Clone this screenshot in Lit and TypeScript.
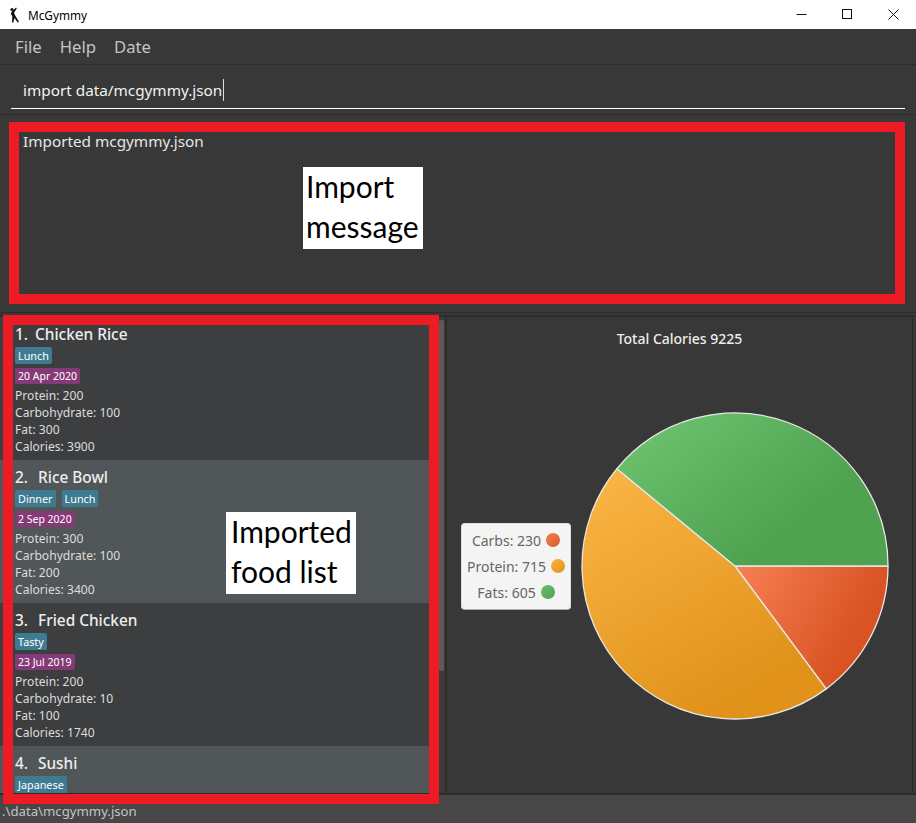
import { LitElement, html, css, svg } from "lit";
import { customElement } from "lit/decorators.js";

const FOODS = [
  { name: "Chicken Rice", tags: ["Lunch"], date: "20 Apr 2020", protein: 200, carbs: 100, fat: 300, calories: 3900 },
  { name: "Rice Bowl", tags: ["Dinner", "Lunch"], date: "2 Sep 2020", protein: 300, carbs: 100, fat: 200, calories: 3400 },
  { name: "Fried Chicken", tags: ["Tasty"], date: "23 Jul 2019", protein: 200, carbs: 10, fat: 100, calories: 1740 },
  { name: "Sushi", tags: ["Japanese"], date: "", protein: 0, carbs: 0, fat: 0, calories: 0 },
];

const SLICES = [
  { label: "Carbs", value: 230, grad: "red", dot: "dot-red" },
  { label: "Protein", value: 715, grad: "orange", dot: "dot-orange" },
  { label: "Fats", value: 605, grad: "green", dot: "dot-green" },
];

const CX = 155;
const CY = 155;
const R = 153;

function slicePaths() {
  const total = SLICES.reduce((sum, s) => sum + s.value, 0);
  let angle = 0;
  return SLICES.map((s) => {
    const next = angle + (s.value / total) * Math.PI * 2;
    const x1 = CX + R * Math.cos(angle);
    const y1 = CY + R * Math.sin(angle);
    const x2 = CX + R * Math.cos(next);
    const y2 = CY + R * Math.sin(next);
    const large = next - angle > Math.PI ? 1 : 0;
    angle = next;
    return svg`<path d="M${CX} ${CY}L${x1} ${y1}A${R} ${R} 0 ${large} 1 ${x2} ${y2}Z" fill="url(#${s.grad})" stroke="#e8e8e8" stroke-width="1.3" stroke-linejoin="round"></path>`;
  });
}

@customElement("app-root")
export class AppRoot extends LitElement {
  static styles = css`
    :host {
      display: flex;
      flex-direction: column;
      position: relative;
      width: 916px;
      height: 823px;
      overflow: hidden;
      background: #383838;
      font-family: "Noto Sans", "Open Sans", sans-serif;
      color: #fff;
    }

    .titlebar {
      height: 29px;
      flex: none;
      display: flex;
      align-items: center;
      background: #fff;
      color: #000;
      font-size: 11.8px;
      padding-left: 9px;
    }
    .app-icon {
      margin-right: 7px;
    }
    .title-text {
      flex: 1;
    }
    .win-btn {
      width: 46px;
      height: 29px;
      display: flex;
      align-items: center;
      justify-content: center;
    }

    .menu {
      height: 35px;
      flex: none;
      display: flex;
      align-items: center;
      gap: 18px;
      padding-left: 15px;
      font-size: 16.7px;
      color: #c4c4c4;
      border-bottom: 1px solid #2c2c2c;
    }

    .command {
      height: 50px;
      flex: none;
      box-sizing: border-box;
      padding: 0 11px 5px;
      border-bottom: 1px solid #2c2c2c;
      display: flex;
    }
    .command-input {
      flex: 1;
      display: flex;
      align-items: center;
      padding-left: 12px;
      padding-top: 6px;
      font-size: 15.3px;
      border-bottom: 1px solid #fff;
      color: #f2f2f2;
    }
    .caret {
      width: 1px;
      height: 22px;
      background: #ddd;
      margin-left: 1px;
    }

    .result {
      height: 198px;
      flex: none;
      box-sizing: border-box;
      padding: 16px 23px;
      font-size: 15.3px;
      color: #e6e6e6;
      border-bottom: 1px solid #2c2c2c;
      margin-bottom: 2px;
    }

    .split {
      flex: 1;
      min-height: 0;
      display: flex;
      border-top: 2px solid #2c2c2c;
      border-bottom: 2px solid #2c2c2c;
    }

    .list-panel {
      width: 445px;
      flex: none;
      display: flex;
      border-right: 1px solid #2c2c2c;
      overflow: hidden;
    }
    .list {
      flex: 1;
      overflow: hidden;
    }
    .scroll-track {
      width: 15px;
      flex: none;
      background: #3a3a3a;
      padding-top: 3px;
    }
    .scroll-thumb {
      width: 5px;
      height: 351px;
      margin-left: 9px;
      background: #5a5a5a;
      border-radius: 2px;
    }

    .cell {
      height: 143px;
      flex: none;
      box-sizing: border-box;
      padding: 8px 15px 0;
      background: #3c3e3f;
      overflow: hidden;
    }
    .cell.even {
      background: #515658;
    }
    .cell-name {
      display: flex;
      font-size: 15.4px;
      line-height: 20px;
      font-weight: 500;
      color: #eee;
    }
    .idx {
      width: 23px;
    }
    .cell:first-child .idx {
      width: 20px;
    }
    .chips {
      display: flex;
      gap: 6px;
      height: 17px;
      margin-top: 2px;
    }
    .chip {
      height: 17px;
      line-height: 17px;
      padding: 0 3px;
      font-size: 10.8px;
      color: #fff;
      border-radius: 2px;
      background: #3e7b91;
    }
    .date-row {
      margin-top: 4px;
      height: 16px;
      margin-bottom: 3px;
      display: flex;
    }
    .date {
      line-height: 16px;
      padding: 0 3px;
      font-size: 10.5px;
      color: #fff;
      border-radius: 2px;
      background: #853a78;
    }
    .macro {
      font-size: 12.1px;
      line-height: 17px;
      color: #ddd;
    }

    .chart-panel {
      flex: 1;
      min-width: 0;
      display: flex;
      flex-direction: column;
      margin-right: 3px;
      border-right: 1px solid #2c2c2c;
      border-left: 1px solid #2c2c2c;
    }
    .chart-title {
      height: 42px;
      flex: none;
      display: flex;
      align-items: center;
      justify-content: center;
      font-size: 14px;
      font-weight: 500;
      color: #eee;
    }
    .chart-body {
      flex: 1;
      display: flex;
      align-items: center;
      gap: 9px;
      padding-left: 14px;
      padding-bottom: 20px;
    }
    .legend {
      width: 110px;
      height: 87px;
      flex: none;
      box-sizing: border-box;
      display: flex;
      flex-direction: column;
      justify-content: center;
      align-items: center;
      gap: 5px;
      background: #f4f4f4;
      border-radius: 4px;
      border: 1px solid #ddd;
      border-bottom-color: #aaa;
      color: #666;
      font-size: 14px;
    }
    .legend-row {
      display: flex;
      align-items: center;
      gap: 5px;
      height: 21px;
    }
    .dot {
      width: 14px;
      height: 14px;
      border-radius: 50%;
    }
    .dot-red {
      background: linear-gradient(135deg, #f47c50, #d95a2b);
    }
    .dot-orange {
      background: linear-gradient(135deg, #f9b342, #e0941a);
    }
    .dot-green {
      background: linear-gradient(135deg, #6ac06d, #4fa24f);
    }
    .pie {
      flex: none;
    }

    .status {
      height: 28px;
      flex: none;
      background: #474747;
      display: flex;
      align-items: center;
      font-size: 13.2px;
      color: #c4c4c4;
      padding-left: 2px;
      padding-top: 4px;
      box-sizing: border-box;
    }

    /* annotations drawn over the screenshot */
    .mark {
      position: absolute;
      box-sizing: border-box;
      border: 10px solid #ed1c24;
    }
    .mark-result {
      left: 9px;
      top: 122px;
      width: 896px;
      height: 182px;
    }
    .mark-list {
      left: 3px;
      top: 315px;
      width: 436px;
      height: 489px;
    }
    .note {
      position: absolute;
      box-sizing: border-box;
      background: #fff;
      color: #000;
      font-family: Lato, "Noto Sans", sans-serif;
      font-size: 30px;
      line-height: 40px;
      padding-left: 3px;
      white-space: pre;
    }
    .note-text {
      display: block;
      margin-top: -1px;
    }
    .note-result {
      left: 303px;
      top: 167px;
      width: 120px;
      height: 82px;
    }
    .note-list {
      left: 226px;
      top: 512px;
      width: 130px;
      height: 82px;
      padding-left: 5px;
    }
  `;

  renderCell(f: (typeof FOODS)[number], i: number) {
    return html`
      <div class="cell ${i % 2 ? "even" : ""}">
        <div class="cell-name"><span class="idx">${i + 1}.</span><span>${f.name}</span></div>
        <div class="chips">${f.tags.map((t) => html`<span class="chip">${t}</span>`)}</div>
        ${f.date
          ? html`
              <div class="date-row"><span class="date">${f.date}</span></div>
              <div class="macro">Protein: ${f.protein}</div>
              <div class="macro">Carbohydrate: ${f.carbs}</div>
              <div class="macro">Fat: ${f.fat}</div>
              <div class="macro">Calories: ${f.calories}</div>
            `
          : ""}
      </div>
    `;
  }

  render() {
    return html`
      <div class="titlebar">
        <svg class="app-icon" width="12" height="17" viewBox="0 0 12 17">
          <circle cx="3" cy="3.5" r="1.6" fill="#111"></circle>
          <path d="M2.5 6L7 1.5l.8.7L5 7l1.5 3 3.5 5.8-1.3.7L5.5 12 4.3 16.5H3L3.3 10 1.8 8z" fill="#111"></path>
        </svg>
        <span class="title-text">McGymmy</span>
        <span class="win-btn">
          <svg width="11" height="11" viewBox="0 0 11 11"><path d="M0.5 5.5h10" stroke="#111" fill="none"></path></svg>
        </span>
        <span class="win-btn">
          <svg width="11" height="11" viewBox="0 0 11 11"><rect x="0.5" y="0.5" width="9" height="9" stroke="#111" fill="none"></rect></svg>
        </span>
        <span class="win-btn">
          <svg width="11" height="11" viewBox="0 0 11 11"><path d="M0.5 0.5l10 10M10.5 0.5l-10 10" stroke="#111" fill="none"></path></svg>
        </span>
      </div>
      <div class="menu"><span>File</span><span>Help</span><span>Date</span></div>
      <div class="command">
        <div class="command-input">import data/mcgymmy.json<span class="caret"></span></div>
      </div>
      <div class="result">Imported mcgymmy.json</div>
      <div class="split">
        <div class="list-panel">
          <div class="list">${FOODS.map((f, i) => this.renderCell(f, i))}</div>
          <div class="scroll-track"><div class="scroll-thumb"></div></div>
        </div>
        <div class="chart-panel">
          <div class="chart-title">Total Calories 9225</div>
          <div class="chart-body">
            <div class="legend">
              ${SLICES.map(
                (s) => html`<div class="legend-row">${s.label}: ${s.value}<span class="dot ${s.dot}"></span></div>`
              )}
            </div>
            <svg class="pie" width="310" height="310" viewBox="0 0 310 310">
              <defs>
                <linearGradient id="red" gradientUnits="userSpaceOnUse" x1="165" y1="165" x2="275" y2="225">
                  <stop offset="0" stop-color="#f47c50"></stop>
                  <stop offset="1" stop-color="#d95323"></stop>
                </linearGradient>
                <linearGradient id="orange" gradientUnits="userSpaceOnUse" x1="30" y1="70" x2="160" y2="290">
                  <stop offset="0" stop-color="#f9b342"></stop>
                  <stop offset="1" stop-color="#e0921a"></stop>
                </linearGradient>
                <linearGradient id="green" gradientUnits="userSpaceOnUse" x1="70" y1="20" x2="170" y2="150">
                  <stop offset="0" stop-color="#6ac06d"></stop>
                  <stop offset="1" stop-color="#4fa24f"></stop>
                </linearGradient>
              </defs>
              ${slicePaths()}
            </svg>
          </div>
        </div>
      </div>
      <div class="status">.\\data\\mcgymmy.json</div>
      <div class="mark mark-result"></div>
      <div class="mark mark-list"></div>
      <div class="note note-result"><span class="note-text">Import
message</span></div>
      <div class="note note-list"><span class="note-text">Imported
food list</span></div>
    `;
  }
}
